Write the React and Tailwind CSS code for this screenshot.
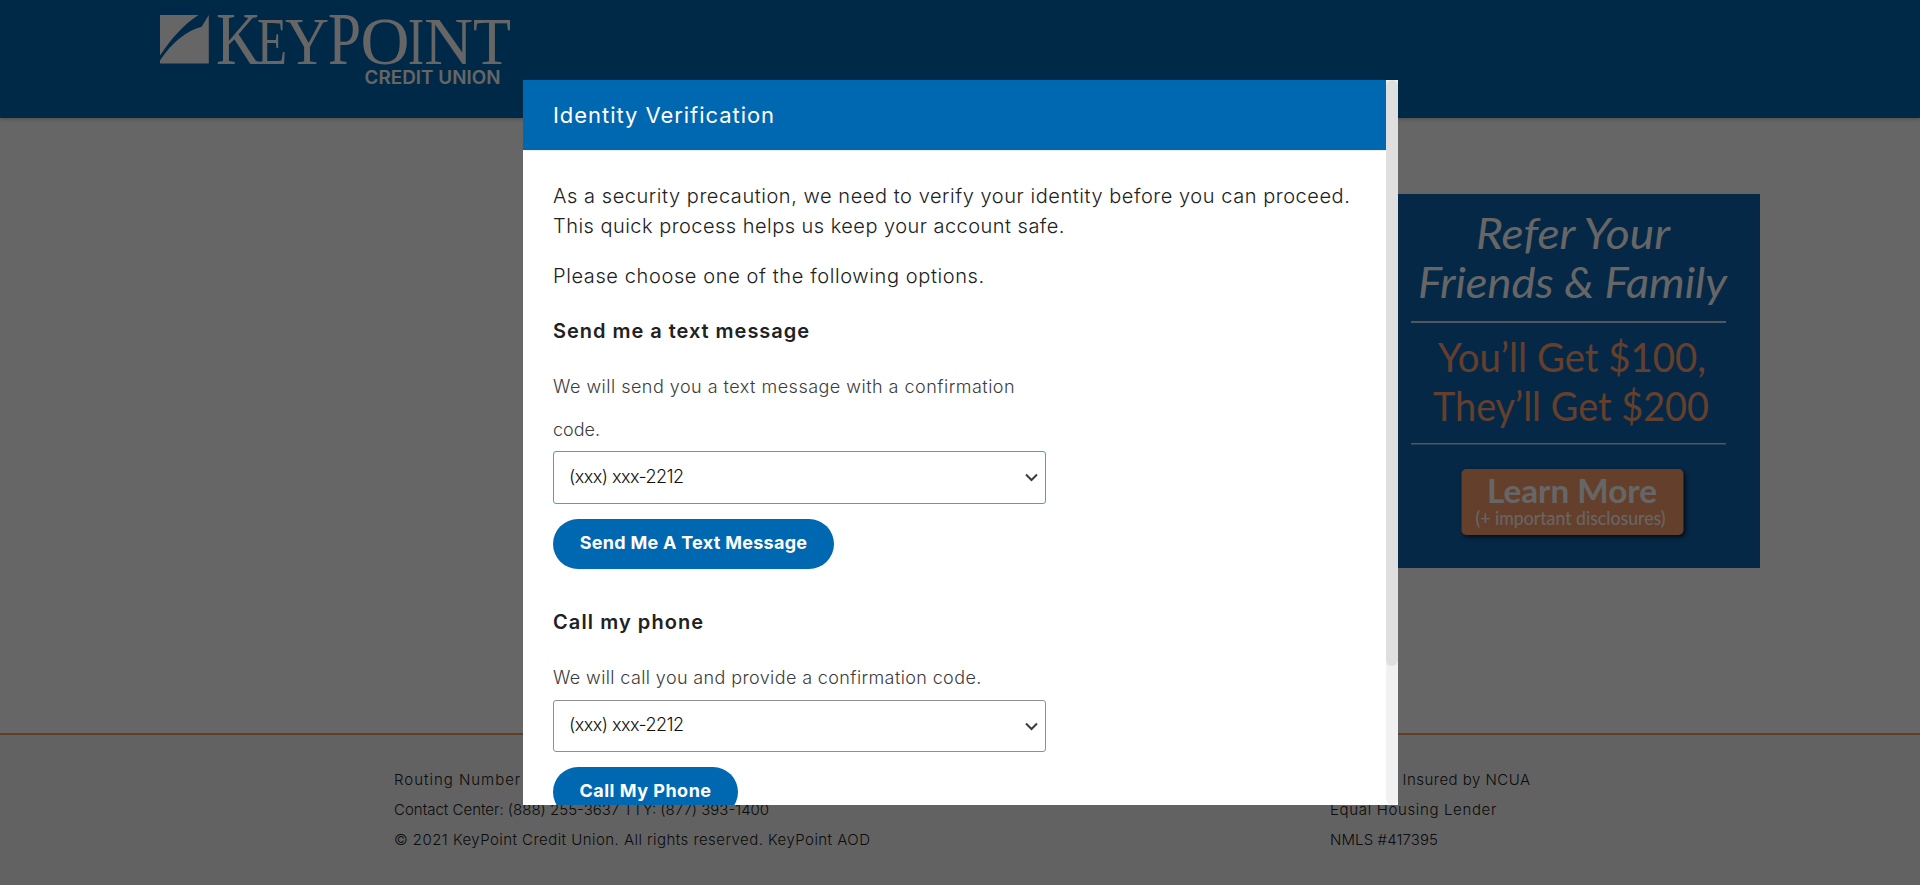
import React from 'react';

const letters = [
  { c: 'K', x: 216, w: 45, y: 63.5, s: 73 },
  { c: 'E', x: 257, w: 30, y: 63.5, s: 67 },
  { c: 'Y', x: 285, w: 44, y: 63.5, s: 67 },
  { c: 'P', x: 328, w: 33, y: 63.5, s: 73 },
  { c: 'O', x: 360.5, w: 49, y: 63.5, s: 67 },
  { c: 'I', x: 408, w: 16, y: 63.5, s: 67 },
  { c: 'N', x: 424, w: 49, y: 63.5, s: 67 },
  { c: 'T', x: 473, w: 38, y: 63.5, s: 67 },
];

function Logo() {
  return (
    <svg width="370" height="96" viewBox="156 0 370 96" className="block overflow-visible" fill="#fff" aria-label="KeyPoint Credit Union">
      <path d="M160 15H198.500C184 24 171 39 160 55.500Z" />
      <path d="M160 63.500V60.500C172 42.500 187 30.500 201.700 26.800L208.800 15V63.500Z" />
      {letters.map((l) => (
        <text
          key={l.c}
          x={l.x}
          y={l.y}
          fontSize={l.s}
          textLength={l.w}
          lengthAdjust="spacingAndGlyphs"
          fontFamily="'Liberation Serif', serif"
        >
          {l.c}
        </text>
      ))}
      <text x="364.500" y="84" fontSize="18.800" fontWeight="600" textLength="136" fontFamily="Inter, 'Liberation Sans', sans-serif">
        CREDIT UNION
      </text>
    </svg>
  );
}

function Promo() {
  return (
    <svg width="375" height="374" viewBox="1385 194 375 374" className="block" fontFamily="Lato, sans-serif">
      <rect x="1385" y="194" width="375" height="374" fill="#0e64ae" />
      <g fill="#fff" fontStyle="italic" fontSize="43">
        <text x="1476" y="249" textLength="194" lengthAdjust="spacingAndGlyphs">Refer Your</text>
        <text x="1418" y="297.500" textLength="309" lengthAdjust="spacingAndGlyphs">Friends &amp; Family</text>
      </g>
      <rect x="1411" y="321" width="315" height="2" fill="#d0d6e0" />
      <rect x="1411" y="443" width="315" height="1.500" fill="#d0d6e0" />
      <g fill="#fa9f6c" fontSize="40.500">
        <text x="1438" y="371.500" textLength="268" lengthAdjust="spacingAndGlyphs">You’ll Get $100,</text>
        <text x="1433" y="420.500" textLength="276" lengthAdjust="spacingAndGlyphs">They’ll Get $200</text>
      </g>
      <rect x="1461.500" y="469" width="222" height="66" rx="5" fill="#fa9f6c" className="drop-shadow-[2px_2px_2px_rgba(0,0,0,0.7)]" />
      <g fill="#fff">
        <text x="1487" y="502.500" fontSize="32" fontWeight="700" textLength="170" lengthAdjust="spacingAndGlyphs">Learn More</text>
        <text x="1475.500" y="524.500" fontSize="19.500" textLength="190" lengthAdjust="spacingAndGlyphs">(+ important disclosures)</text>
      </g>
    </svg>
  );
}

function PhoneSelect({ active }) {
  return (
    <div
      className={
        active
          ? 'flex h-[53px] w-[493px] items-center justify-between rounded-[3px] border border-[#35a3ee] pr-[7px] pl-[15px]'
          : 'mt-px flex h-[52px] w-[493px] items-center justify-between rounded-[3px] border border-[#8f8f8f] pr-[7px] pl-[15px]'
      }
    >
      <span className="pb-0.5 text-[18px] leading-6 font-light tracking-[-0.55px] text-[#111]">(xxx) xxx-2212</span>
      <svg width="13" height="9" viewBox="0 0 13 9" className="block" fill="none" stroke="#3b3b3b" strokeWidth="2">
        <path d="M1 1.500L6.500 7L12 1.500" />
      </svg>
    </div>
  );
}

function ActionButton({ children, className }) {
  return (
    <button className={'mt-[15px] block h-[50px] rounded-[25px] bg-[#0067b1] pb-0.5 text-center text-[18px] leading-6 font-bold whitespace-nowrap text-white ' + className}>
      {children}
    </button>
  );
}

function Modal() {
  return (
    <div role="dialog" className="flex h-[725px] w-[875px] bg-white text-[#212121]">
      <div className="h-full min-w-0 flex-1 overflow-hidden">
        <div className="flex h-[70px] items-center bg-[#0067b1] pl-[30px]">
          <h1 className="text-[22px] leading-[30px] tracking-[0.95px] text-white">Identity Verification</h1>
        </div>
        <div className="border-t border-[#eceff3] pt-[30px] pl-[30px]">
          <div className="text-[20px] leading-[30px] font-light whitespace-nowrap">
            <p className="tracking-[0.55px]">As a security precaution, we need to verify your identity before you can proceed.</p>
            <p className="tracking-[0.47px]">This quick process helps us keep your account safe.</p>
            <p className="mt-5 tracking-[0.61px]">Please choose one of the following options.</p>
          </div>
          <h2 className="mt-[25px] text-[20px] leading-[30px] font-semibold tracking-[0.97px]">Send me a text message</h2>
          <p className="mt-[19px] text-[18px] leading-[43px] font-light tracking-[0.48px] text-[#3c3c3c]">
            We will send you a text message with a confirmation
            <br />
            <span className="tracking-normal">code.</span>
          </p>
          <PhoneSelect active />
          <ActionButton className="w-[281px] tracking-[0.28px]">Send Me A Text Message</ActionButton>
          <h2 className="mt-[38px] text-[20px] leading-[30px] font-semibold tracking-[1.08px]">Call my phone</h2>
          <p className="mt-[19px] text-[18px] leading-[43px] font-light tracking-[0.38px] text-[#3c3c3c]">
            We will call you and provide a confirmation code.
          </p>
          <PhoneSelect />
          <ActionButton className="w-[185px] tracking-[0.5px]">Call My Phone</ActionButton>
        </div>
      </div>
      <div className="h-full w-3 rounded-b-md bg-[#f1f1f1]">
        <div className="h-[586px] rounded-md bg-[#dfdfdf]" />
      </div>
    </div>
  );
}

export default function App() {
  return (
    <div className="relative h-[885px] w-full overflow-hidden bg-white font-[Inter,'Liberation_Sans',sans-serif]">
      <div className="flex h-full flex-col">
        <header className="h-[118px] shrink-0 bg-[#0067b1] pl-[156px] shadow-[0_1px_4px_rgba(0,0,0,0.25)]">
          <Logo />
        </header>
        <main className="flex flex-1 justify-end pt-[76px] pr-40">
          <Promo />
        </main>
        <footer className="flex h-[152px] shrink-0 justify-between border-t-2 border-[#fa9c5a] bg-[#f4f4f4] pt-[30px] pr-[340px] pl-[394px] text-[15px] leading-[30px] font-light whitespace-nowrap text-[#222]">
          <div>
            <p className="tracking-[0.98px]">Routing Number</p>
            <p className="tracking-normal">Contact Center: (888) 255-3637 TTY: (877) 393-1400</p>
            <p className="tracking-[0.45px]">© 2021 KeyPoint Credit Union. All rights reserved. KeyPoint AOD</p>
          </div>
          <div className="w-[250px]">
            <p className="tracking-[0.47px]">Federally Insured by NCUA</p>
            <p className="tracking-[0.65px]">Equal Housing Lender</p>
            <p className="tracking-[0.1px]">NMLS #417395</p>
          </div>
        </footer>
      </div>
      <div className="absolute inset-0 flex justify-center bg-black/60 pt-20 pl-px">
        <Modal />
      </div>
    </div>
  );
}
